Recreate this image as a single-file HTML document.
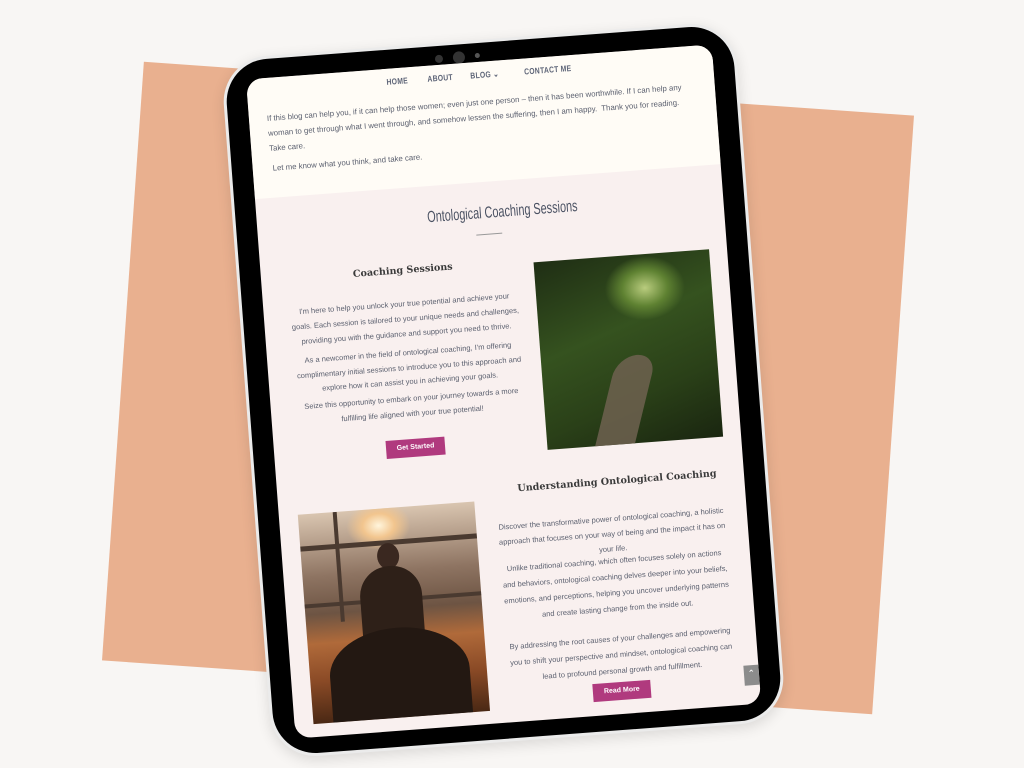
<!DOCTYPE html>
<html><head><meta charset="utf-8"><style>
*{margin:0;padding:0;box-sizing:border-box}
html,body{width:1024px;height:768px;overflow:hidden;background:#f8f6f4;font-family:"Liberation Sans",sans-serif}
.peach{position:absolute;left:122px;top:88px;width:772px;height:600px;background:#e9b08f;transform:rotate(4deg)}
.tab{position:absolute;left:246px;top:39px;width:515px;height:702px;background:#000;border-radius:46px;transform:rotate(-4.3deg);border:3px solid #ebebeb;box-shadow:0 4px 14px rgba(0,0,0,.12)}
.cam{position:absolute;top:6px;border-radius:50%;background:#333}
.scr{position:absolute;left:21px;top:19px;width:467px;height:661px;background:#f9f0ef;border-radius:16px;overflow:hidden;color:#5a5f6e}
.top{position:absolute;left:0;top:0;width:467px;height:120px;background:#fffcf6}
.nav{position:absolute;top:8px;font-size:8.5px;letter-spacing:.3px;color:#5d6477;transform:scaleX(.8);transform-origin:left;font-weight:bold}
.p{position:absolute;font-size:7.5px;line-height:14px;color:#5a5f6e;white-space:nowrap}
.c{text-align:center}
h2{position:absolute;font-family:"Liberation Sans",sans-serif;font-weight:normal;font-size:16px;color:#4b5263;transform:scaleX(.68);transform-origin:center;white-space:nowrap}
h3{position:absolute;font-family:"DejaVu Serif",serif;font-weight:bold;font-size:9.6px;color:#3a3a3a;white-space:nowrap}
.btn{position:absolute;background:#b03a7e;color:#fff;font-size:7px;font-weight:bold;text-align:center;line-height:18px;height:18px}
.img1{position:absolute;left:273px;top:204px;width:176px;height:188px;overflow:hidden;background:
radial-gradient(ellipse 50px 40px at 62% 18%,#b9cc7e 0%,#5f8232 45%,transparent 80%),
linear-gradient(160deg,#1f2e14,#35521f 40%,#2a4018 70%,#1a2610)}
.img2{position:absolute;left:19px;top:438px;width:177px;height:210px;overflow:hidden;background:
radial-gradient(ellipse 40px 30px at 45% 8%,#fff5dc 0%,#f2c58e 40%,transparent 80%),
linear-gradient(180deg,#d9c5b0 0%,#8e7462 30%,#6d5443 48%,#b06a3a 62%,#8a4a26 80%,#4a2814 100%)}
</style></head><body>
<div class="peach"></div>
<div class="tab">
 <div class="cam" style="left:211px;width:8px;height:8px;top:9px"></div>
 <div class="cam" style="left:229px;width:12px;height:12px;top:7px"></div>
 <div class="cam" style="left:251px;width:5px;height:5px;top:10px;background:#555"></div>
 <div class="scr">
  <div class="top"></div>
  <div class="nav" style="left:140px">HOME</div>
  <div class="nav" style="left:181px">ABOUT</div>
  <div class="nav" style="left:224px">BLOG ⌄</div>
  <div class="nav" style="left:278px">CONTACT ME</div>
  <div class="p" style="left:18px;top:33px;line-height:15px;font-size:7.8px">If this blog can help you, if it can help those women; even just one person – then it has been worthwhile. If I can help any<br>woman to get through what I went through, and somehow lessen the suffering, then I am happy.&nbsp; Thank you for reading.<br>Take care.</div>
  <div class="p" style="left:20px;top:84px;font-size:7.8px">Let me know what you think, and take care.</div>
  <h2 style="left:135px;top:143px">Ontological Coaching Sessions</h2>
  <div style="position:absolute;left:218px;top:172px;width:26px;height:1px;background:#999"></div>
  <h3 style="left:92px;top:197px">Coaching Sessions</h3>
  <div class="p c" style="left:21px;top:228px;width:240px;line-height:15px">I'm here to help you unlock your true potential and achieve your<br>goals. Each session is tailored to your unique needs and challenges,<br>providing you with the guidance and support you need to thrive.</div>
  <div class="p c" style="left:21px;top:278px;width:240px;line-height:14.5px">As a newcomer in the field of ontological coaching, I'm offering<br>complimentary initial sessions to introduce you to this approach and<br>explore how it can assist you in achieving your goals.</div>
  <div class="p c" style="left:26px;top:323px;width:230px;line-height:15px">Seize this opportunity to embark on your journey towards a more<br>fulfilling life aligned with your true potential!</div>
  <div class="btn" style="left:112px;top:371px;width:59px">Get Started</div>
  <div class="img1">
   <div style="position:absolute;left:60px;top:100px;width:40px;height:100px;background:#6e6250;transform:skewX(-18deg);border-radius:20px 20px 0 0;opacity:.85"></div>
  </div>
  <h3 style="left:240px;top:423px">Understanding Ontological Coaching</h3>
  <div class="img2">
   <div style="position:absolute;left:0;top:32px;width:177px;height:5px;background:#4a3a30"></div>
   <div style="position:absolute;left:0;top:90px;width:177px;height:4px;background:#4a3a30"></div>
   <div style="position:absolute;left:35px;top:0;width:4px;height:110px;background:#4a3a30"></div>
   <div style="position:absolute;left:76px;top:35px;width:22px;height:26px;border-radius:50%;background:#3a2820"></div>
   <div style="position:absolute;left:56px;top:58px;width:62px;height:80px;border-radius:30px 30px 10px 10px;background:#2e2018"></div>
   <div style="position:absolute;left:20px;top:120px;width:140px;height:90px;border-radius:50% 50% 0 0;background:#231812"></div>
  </div>
  <div class="p c" style="left:208px;top:458px;width:246px;line-height:15px">Discover the transformative power of ontological coaching, a holistic<br>approach that focuses on your way of being and the impact it has on<br>your life.</div>
  <div class="p c" style="left:208px;top:500px;width:246px;line-height:16px">Unlike traditional coaching, which often focuses solely on actions<br>and behaviors, ontological coaching delves deeper into your beliefs,<br>emotions, and perceptions, helping you uncover underlying patterns<br>and create lasting change from the inside out.</div>
  <div class="p c" style="left:208px;top:578px;width:246px;line-height:16px">By addressing the root causes of your challenges and empowering<br>you to shift your perspective and mindset, ontological coaching can<br>lead to profound personal growth and fulfillment.</div>
  <div class="btn" style="left:300px;top:629px;width:58px">Read More</div>
  <div style="position:absolute;left:452px;top:622px;width:15px;height:20px;background:#8c8c8c;color:#fff;font-size:9px;text-align:center;line-height:16px">⌃</div>
 </div>
</div>
</body></html>
